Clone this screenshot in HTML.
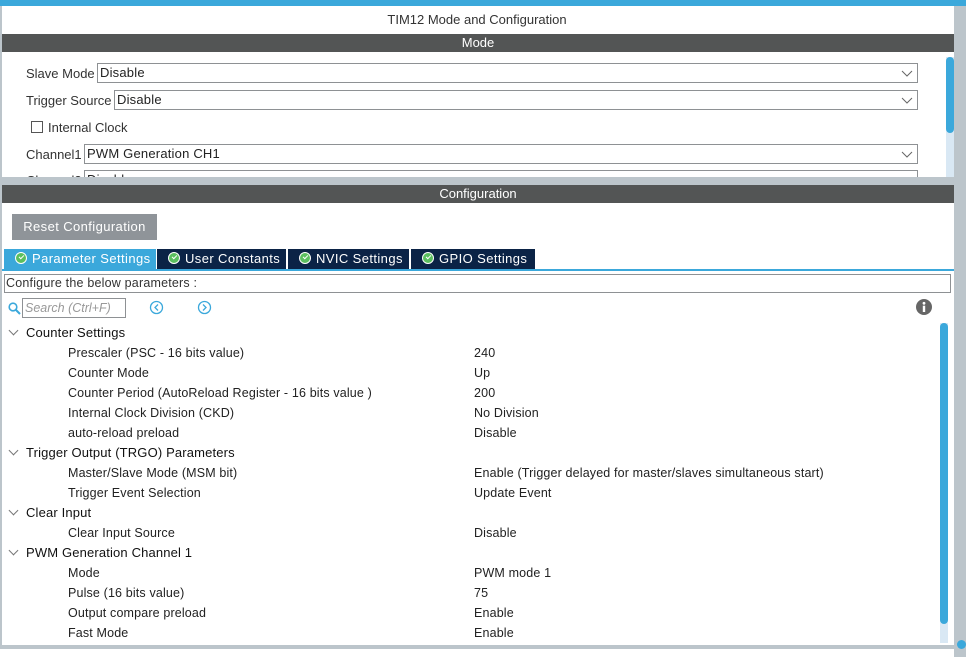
<!DOCTYPE html>
<html><head><meta charset="utf-8"><style>
*{margin:0;padding:0;box-sizing:border-box}
body{width:966px;height:657px;position:relative;background:#fff;font-family:"Liberation Sans",sans-serif;font-size:12.5px;color:#222;overflow:hidden}
.a{position:absolute}
.sel{position:absolute;height:20px;border:1px solid #8e9194;background:#fff;padding-left:2px;line-height:18px;font-size:13px;color:#222;letter-spacing:.2px}
.sel svg{position:absolute;right:4px;top:6px}
.lbl{position:absolute;font-size:13px;color:#333}
.tab{position:absolute;top:249px;height:20px;background:#0b2346;color:#fff;font-size:13px;line-height:19px;letter-spacing:.4px}
.chk{display:inline-block;width:12px;height:12px;border-radius:50%;background:#5bbf5f;border:1px solid #fff;vertical-align:-1px;margin:0 5px 0 11px;position:relative}
.chk:after{content:"";position:absolute;left:2.5px;top:2px;width:4px;height:2px;border-left:1.5px solid #fff;border-bottom:1.5px solid #fff;transform:rotate(-45deg)}
.r{position:absolute;font-size:12.5px;color:#222;white-space:nowrap;letter-spacing:.15px}
.g{left:26px;font-size:13px;color:#111}
.gc{position:absolute;left:10px;width:7px;height:7px;border-right:1px solid #777;border-bottom:1px solid #777;transform:rotate(45deg)}
</style></head><body>
<div class="a" style="left:0;top:0;width:966px;height:6px;background:#3ba8db"></div>
<div class="a" style="left:954px;top:6px;width:12px;height:651px;background:#bcc5cb"></div>
<div class="a" style="left:0;top:6px;width:2px;height:640px;background:#bcc5cb"></div>
<div class="a" style="left:0;top:645px;width:954px;height:4px;background:#bcc5cb"></div>
<div class="a" style="left:0;top:12px;width:954px;text-align:center;font-size:13px;color:#333">TIM12 Mode and Configuration</div>
<div class="a" style="left:2px;top:34px;width:952px;height:18px;background:#535555;color:#fff;text-align:center;font-size:13px;line-height:18px">Mode</div>
<div class="lbl" style="left:26px;top:66px">Slave Mode</div>
<div class="sel" style="left:97px;top:63px;width:821px">Disable<svg width="12" height="7"><path d="M1 1l5 5 5-5" fill="none" stroke="#666"/></svg></div>
<div class="lbl" style="left:26px;top:93px">Trigger Source</div>
<div class="sel" style="left:114px;top:90px;width:804px">Disable<svg width="12" height="7"><path d="M1 1l5 5 5-5" fill="none" stroke="#666"/></svg></div>
<div class="a" style="left:31px;top:121px;width:12px;height:12px;border:1px solid #555"></div>
<div class="lbl" style="left:48px;top:120px">Internal Clock</div>
<div class="lbl" style="left:26px;top:147px">Channel1</div>
<div class="sel" style="left:84px;top:144px;width:834px">PWM Generation CH1<svg width="12" height="7"><path d="M1 1l5 5 5-5" fill="none" stroke="#666"/></svg></div>
<div class="lbl" style="left:26px;top:173px">Channel2</div>
<div class="sel" style="left:84px;top:170px;width:834px">Disable</div>
<div class="a" style="left:946px;top:57px;width:8px;height:120px;background:#d9e8f4"></div>
<div class="a" style="left:946px;top:57px;width:8px;height:76px;background:#3ba8db;border-radius:4px"></div>
<div class="a" style="left:0;top:177px;width:954px;height:8px;background:#bcc5cb"></div>
<div class="a" style="left:2px;top:185px;width:952px;height:18px;background:#535555;color:#fff;text-align:center;font-size:13px;line-height:18px">Configuration</div>
<div class="a" style="left:12px;top:214px;width:145px;height:26px;background:#8f9499;color:#fff;font-size:13px;line-height:26px;text-align:center;letter-spacing:.4px">Reset Configuration</div>
<div class="tab" style="left:4px;width:152px;background:#3ba8db"><span class="chk"></span>Parameter Settings</div>
<div class="tab" style="left:157px;width:129px"><span class="chk"></span>User Constants</div>
<div class="tab" style="left:288px;width:121px"><span class="chk"></span>NVIC Settings</div>
<div class="tab" style="left:411px;width:124px"><span class="chk"></span>GPIO Settings</div>
<div class="a" style="left:2px;top:269px;width:952px;height:2px;background:#3ba8db"></div>
<div class="a" style="left:4px;top:274px;width:947px;height:19px;border:1px solid #8e9194;font-size:12.5px;line-height:17px;padding-left:1px;color:#333;letter-spacing:.2px">Configure the below parameters :</div>
<svg class="a" style="left:8px;top:302px" width="13" height="13"><circle cx="5" cy="5" r="3.8" fill="none" stroke="#3ba8db" stroke-width="1.6"/><path d="M8 8l4 4" stroke="#3ba8db" stroke-width="2"/></svg>
<div class="a" style="left:22px;top:298px;width:104px;height:20px;border:1px solid #8e9194;font-style:italic;color:#999;font-size:12.5px;line-height:18px;padding-left:2px">Search (Ctrl+F)</div>
<svg class="a" style="left:149px;top:300px" width="15" height="15"><circle cx="7.5" cy="7.5" r="6" fill="none" stroke="#3ba8db" stroke-width="1.3"/><path d="M9 4.5l-3 3 3 3" fill="none" stroke="#3ba8db" stroke-width="1.3"/></svg>
<svg class="a" style="left:197px;top:300px" width="15" height="15"><circle cx="7.5" cy="7.5" r="6" fill="none" stroke="#3ba8db" stroke-width="1.3"/><path d="M6 4.5l3 3-3 3" fill="none" stroke="#3ba8db" stroke-width="1.3"/></svg>
<svg class="a" style="left:916px;top:299px" width="16" height="16"><circle cx="8" cy="8" r="8" fill="#666"/><circle cx="8" cy="4.3" r="1.4" fill="#fff"/><rect x="6.8" y="6.7" width="2.4" height="6.3" fill="#fff"/></svg>
<div class="a" style="left:940px;top:323px;width:8px;height:320px;background:#d9e8f4"></div>
<div class="a" style="left:940px;top:323px;width:8px;height:301px;background:#3ba8db;border-radius:4px"></div>

<div class="gc" style="top:327px"></div><div class="r g" style="top:325px">Counter Settings</div>
<div class="r" style="left:68px;top:346px">Prescaler (PSC - 16 bits value)</div><div class="r" style="left:474px;top:346px">240</div>
<div class="r" style="left:68px;top:366px">Counter Mode</div><div class="r" style="left:474px;top:366px">Up</div>
<div class="r" style="left:68px;top:386px">Counter Period (AutoReload Register - 16 bits value )</div><div class="r" style="left:474px;top:386px">200</div>
<div class="r" style="left:68px;top:406px">Internal Clock Division (CKD)</div><div class="r" style="left:474px;top:406px">No Division</div>
<div class="r" style="left:68px;top:426px">auto-reload preload</div><div class="r" style="left:474px;top:426px">Disable</div>
<div class="gc" style="top:447px"></div><div class="r g" style="top:445px">Trigger Output (TRGO) Parameters</div>
<div class="r" style="left:68px;top:466px">Master/Slave Mode (MSM bit)</div><div class="r" style="left:474px;top:466px">Enable (Trigger delayed for master/slaves simultaneous start)</div>
<div class="r" style="left:68px;top:486px">Trigger Event Selection</div><div class="r" style="left:474px;top:486px">Update Event</div>
<div class="gc" style="top:507px"></div><div class="r g" style="top:505px">Clear Input</div>
<div class="r" style="left:68px;top:526px">Clear Input Source</div><div class="r" style="left:474px;top:526px">Disable</div>
<div class="gc" style="top:547px"></div><div class="r g" style="top:545px">PWM Generation Channel 1</div>
<div class="r" style="left:68px;top:566px">Mode</div><div class="r" style="left:474px;top:566px">PWM mode 1</div>
<div class="r" style="left:68px;top:586px">Pulse (16 bits value)</div><div class="r" style="left:474px;top:586px">75</div>
<div class="r" style="left:68px;top:606px">Output compare preload</div><div class="r" style="left:474px;top:606px">Enable</div>
<div class="r" style="left:68px;top:626px">Fast Mode</div><div class="r" style="left:474px;top:626px">Enable</div>
<div class="a" style="left:957px;top:640px;width:9px;height:9px;border-radius:50%;background:#3ba8db"></div>
</body></html>
